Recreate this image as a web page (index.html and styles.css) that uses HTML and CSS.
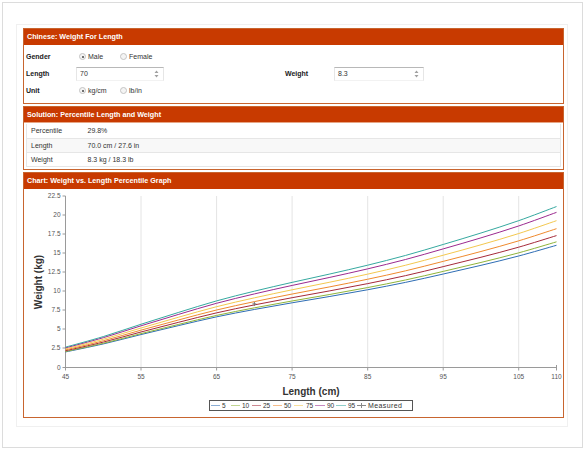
FILE: index.html
```html
<!DOCTYPE html>
<html lang="en">
<head>
<meta charset="utf-8">
<title>Chinese: Weight For Length</title>
<link rel="stylesheet" href="styles.css">
</head>
<body>
<div class="frame">
  <div class="panel">
    <section class="card card-form">
      <div class="card-head">Chinese: Weight For Length</div>
      <div class="form">
        <div class="lbl">Gender</div>
        <div class="ctl">
          <span class="opt"><span class="radio on"></span>Male</span>
          <span class="opt"><span class="radio"></span>Female</span>
        </div>
        <div></div><div></div>

        <div class="lbl">Length</div>
        <div class="ctl">
          <div class="num num-len"><span>70</span>
            <svg class="spin" width="5" height="8" viewBox="0 0 5 8"><path d="M2.5 0.5 L4.5 3 L0.5 3 Z M2.5 7.5 L4.5 5 L0.5 5 Z" fill="#a0a0a0"/></svg>
          </div>
        </div>
        <div class="lbl">Weight</div>
        <div class="ctl">
          <div class="num num-wt"><span>8.3</span>
            <svg class="spin" width="5" height="8" viewBox="0 0 5 8"><path d="M2.5 0.5 L4.5 3 L0.5 3 Z M2.5 7.5 L4.5 5 L0.5 5 Z" fill="#a0a0a0"/></svg>
          </div>
        </div>

        <div class="lbl">Unit</div>
        <div class="ctl">
          <span class="opt"><span class="radio on"></span>kg/cm</span>
          <span class="opt"><span class="radio"></span>lb/in</span>
        </div>
        <div></div><div></div>
      </div>
    </section>

    <section class="card card-result">
      <div class="card-head">Solution: Percentile Length and Weight</div>
      <div class="result-body">
        <table class="result">
          <tr><td class="k">Percentile</td><td>29.8%</td></tr>
          <tr class="alt"><td class="k">Length</td><td>70.0 cm / 27.6 in</td></tr>
          <tr><td class="k">Weight</td><td>8.3 kg / 18.3 lb</td></tr>
        </table>
      </div>
    </section>

    <section class="card card-chart">
      <div class="card-head">Chart: Weight vs. Length Percentile Graph</div>
      <div class="chart-body">
        <svg class="chart" width="538" height="228" viewBox="0 0 538 228">
          <g class="grid">
            <line x1="117" y1="7" x2="117" y2="178"/>
            <line x1="192.6" y1="7" x2="192.6" y2="178"/>
            <line x1="268.1" y1="7" x2="268.1" y2="178"/>
            <line x1="343.7" y1="7" x2="343.7" y2="178"/>
            <line x1="419.2" y1="7" x2="419.2" y2="178"/>
            <line x1="494.7" y1="7" x2="494.7" y2="178"/>
          </g>
          <g class="axis">
            <line x1="41.5" y1="7" x2="41.5" y2="178.5"/>
            <line x1="41" y1="178.5" x2="532.5" y2="178.5"/>
            <line x1="38.5" y1="7" x2="41.5" y2="7"/>
            <line x1="38.5" y1="26" x2="41.5" y2="26"/>
            <line x1="38.5" y1="45" x2="41.5" y2="45"/>
            <line x1="38.5" y1="64" x2="41.5" y2="64"/>
            <line x1="38.5" y1="83" x2="41.5" y2="83"/>
            <line x1="38.5" y1="102" x2="41.5" y2="102"/>
            <line x1="38.5" y1="121" x2="41.5" y2="121"/>
            <line x1="38.5" y1="140" x2="41.5" y2="140"/>
            <line x1="38.5" y1="159" x2="41.5" y2="159"/>
            <line x1="38.5" y1="178.5" x2="41.5" y2="178.5"/>
            <line x1="41.5" y1="178.5" x2="41.5" y2="181.5"/>
            <line x1="117" y1="178.5" x2="117" y2="181.5"/>
            <line x1="192.6" y1="178.5" x2="192.6" y2="181.5"/>
            <line x1="268.1" y1="178.5" x2="268.1" y2="181.5"/>
            <line x1="343.7" y1="178.5" x2="343.7" y2="181.5"/>
            <line x1="419.2" y1="178.5" x2="419.2" y2="181.5"/>
            <line x1="494.7" y1="178.5" x2="494.7" y2="181.5"/>
            <line x1="532.5" y1="176" x2="532.5" y2="181.5"/>
          </g>
          <g class="ylab">
            <text x="36.5" y="9.3">22.5</text>
            <text x="36.5" y="28.3">20</text>
            <text x="36.5" y="47.3">17.5</text>
            <text x="36.5" y="66.3">15</text>
            <text x="36.5" y="85.3">12.5</text>
            <text x="36.5" y="104.3">10</text>
            <text x="36.5" y="123.3">7.5</text>
            <text x="36.5" y="142.3">5</text>
            <text x="36.5" y="161.3">2.5</text>
            <text x="36.5" y="180.6">0</text>
          </g>
          <g class="xlab">
            <text x="41.5" y="189.5">45</text>
            <text x="117" y="189.5">55</text>
            <text x="192.6" y="189.5">65</text>
            <text x="268.1" y="189.5">75</text>
            <text x="343.7" y="189.5">85</text>
            <text x="419.2" y="189.5">95</text>
            <text x="494.7" y="189.5">105</text>
            <text x="532.5" y="189.5">110</text>
          </g>
          <text class="atitle" x="287" y="206">Length (cm)</text>
          <text class="atitle" transform="translate(17.5 93) rotate(-90)" x="0" y="0">Weight (kg)</text>
          <g id="curves"></g>
          <path class="marker" d="M228.4 114.9 H232.4 M230.4 112.9 V116.9"/>
          <g class="legend">
            <rect x="185.5" y="211.5" width="203" height="10"/>
            <line class="l5" x1="187" y1="216.5" x2="196" y2="216.5"/><text x="198" y="218.8">5</text>
            <line class="l10" x1="207" y1="216.5" x2="216" y2="216.5"/><text x="218" y="218.8">10</text>
            <line class="l25" x1="228" y1="216.5" x2="237" y2="216.5"/><text x="239" y="218.8">25</text>
            <line class="l50" x1="249" y1="216.5" x2="258" y2="216.5"/><text x="260" y="218.8">50</text>
            <line class="l75" x1="270" y1="216.5" x2="279" y2="216.5"/><text x="282" y="218.8">75</text>
            <line class="l90" x1="291" y1="216.5" x2="301" y2="216.5"/><text x="303" y="218.8">90</text>
            <line class="l95" x1="312" y1="216.5" x2="322" y2="216.5"/><text x="324" y="218.8">95</text>
            <path class="lmark" d="M333 216.5 H342 M337.5 214 V219"/><text class="lm" x="344" y="218.8">Measured</text>
          </g>
        </svg>
      </div>
    </section>
  </div>
</div>
<script src="script.js"></script>
</body>
</html>
```

FILE: styles.css
```css
* { box-sizing: border-box; }
html, body { margin: 0; padding: 0; background: #fff; }
body {
  padding: 2px;
  font-family: "Liberation Sans", Arial, sans-serif;
  font-size: 7px;
  color: #222;
}
.frame {
  width: 581px;
  height: 446px;
  border: 1px solid #dcdcdc;
  padding: 21px 0 0 13px;
}
.panel {
  width: 552px;
  height: 403px;
  border: 1px solid #f0f0f0;
  padding: 3px 3px 0 6px;
}
.card {
  border: 1px solid #c8652f;
  background: #fff;
  margin-bottom: 2px;
}
.card-head {
  height: 16px;
  line-height: 16px;
  padding-left: 3px;
  background: #c83a00;
  color: #fff;
  font-weight: bold;
  font-size: 7.2px;
  white-space: nowrap;
}
.form {
  display: grid;
  grid-template-columns: 50px 209px 49px 90px;
  grid-auto-rows: 17px;
  align-items: center;
  padding: 3px 0 4px 2px;
}
.lbl { font-weight: bold; color: #1a1a1a; }
.ctl { display: flex; align-items: center; }
.opt {
  display: inline-flex;
  align-items: center;
  width: 41px;
  padding-left: 3px;
  color: #333;
}
.radio {
  width: 7px;
  height: 7px;
  border-radius: 50%;
  border: 1px solid #c4c4c4;
  background: #f4f4f4;
  margin-right: 2px;
  position: relative;
  flex: none;
}
.radio.on::after {
  content: "";
  position: absolute;
  left: 1.5px;
  top: 1.5px;
  width: 2px;
  height: 2px;
  border-radius: 50%;
  background: #444;
}
.num {
  height: 14px;
  display: flex;
  align-items: center;
  justify-content: space-between;
  padding: 0 4px 0 3px;
  border: 1px solid #e6e6e6;
  border-top-color: #b8b8b8;
  border-bottom-color: #f2f2f2;
  color: #333;
}
.num-len { width: 88px; }
.num-wt { width: 90px; }
.spin { display: block; }

.card-result .card-head { border-bottom: 1px solid #e7a584; }
.result-body { padding: 1px 2px 2px; }
.result {
  width: 100%;
  border-collapse: collapse;
  border-left: 1px solid #e6e6e6;
  border-right: 1px solid #e6e6e6;
  color: #333;
}
.result td {
  height: 14px;
  padding: 0 0 0 6px;
  border-bottom: 1px solid #e6e6e6;
  white-space: nowrap;
}
.result td.k { width: 55px; padding-left: 4px; }
.result tr.alt td { background: #f8f8f8; }

.chart-body { height: 228px; }
.chart { display: block; font-family: "Liberation Sans", Arial, sans-serif; }
.grid line { stroke: #e4e4e4; stroke-width: 1; }
.axis line { stroke: #9a9a9a; stroke-width: 1; }
.ylab text { font-size: 6.5px; fill: #555; text-anchor: end; }
.xlab text { font-size: 6.5px; fill: #555; text-anchor: middle; }
.atitle { font-size: 10px; font-weight: bold; fill: #333; text-anchor: middle; }
.curve { fill: none; stroke-width: 1; }
.marker { stroke: #777; stroke-width: 1; fill: none; }
.legend rect { fill: #fff; stroke: #555; stroke-width: 1; }
.legend text { font-size: 6.5px; fill: #333; }
.legend text.lm { font-size: 7px; letter-spacing: 0.4px; }
.legend line { stroke-width: 1; opacity: 0.55; }
.legend .lmark { stroke: #888; stroke-width: 1; fill: none; }
.l5 { stroke: #2e6db4; }
.l10 { stroke: #8fb43a; }
.l25 { stroke: #a52a3a; }
.l50 { stroke: #ef8a2e; }
.l75 { stroke: #f3c84f; }
.l90 { stroke: #9b2a8f; }
.l95 { stroke: #36a9a0; }
```

FILE: script.js
```js
(function () {
  var median = [
    [45, 2.25], [50, 3.45], [55, 4.85], [60, 6.2], [65, 7.5], [70, 8.6],
    [75, 9.6], [80, 10.55], [85, 11.55], [90, 12.65], [95, 13.9],
    [100, 15.2], [105, 16.6], [110, 18.2]
  ];
  var series = [
    { cls: 'l5', f: 0.88 },
    { cls: 'l10', f: 0.905 },
    { cls: 'l25', f: 0.95 },
    { cls: 'l50', f: 1.0 },
    { cls: 'l75', f: 1.058 },
    { cls: 'l90', f: 1.118 },
    { cls: 'l95', f: 1.16 }
  ];
  function X(v) { return 41.5 + (v - 45) * 7.554; }
  function Y(w) { return 178 - w * 7.6; }
  function fx(n) { return n.toFixed(2); }
  function path(pts) {
    var d = 'M' + fx(pts[0][0]) + ',' + fx(pts[0][1]);
    for (var i = 0; i < pts.length - 1; i++) {
      var p0 = pts[i - 1] || pts[i], p1 = pts[i], p2 = pts[i + 1], p3 = pts[i + 2] || p2;
      var c1x = p1[0] + (p2[0] - p0[0]) / 6, c1y = p1[1] + (p2[1] - p0[1]) / 6;
      var c2x = p2[0] - (p3[0] - p1[0]) / 6, c2y = p2[1] - (p3[1] - p1[1]) / 6;
      d += ' C' + fx(c1x) + ',' + fx(c1y) + ' ' + fx(c2x) + ',' + fx(c2y) + ' ' + fx(p2[0]) + ',' + fx(p2[1]);
    }
    return d;
  }
  var g = document.getElementById('curves');
  var ns = 'http://www.w3.org/2000/svg';
  series.forEach(function (s) {
    var pts = median.map(function (m) { return [X(m[0]), Y(m[1] * s.f)]; });
    var p = document.createElementNS(ns, 'path');
    p.setAttribute('d', path(pts));
    p.setAttribute('class', 'curve ' + s.cls);
    g.appendChild(p);
  });
})();
```
